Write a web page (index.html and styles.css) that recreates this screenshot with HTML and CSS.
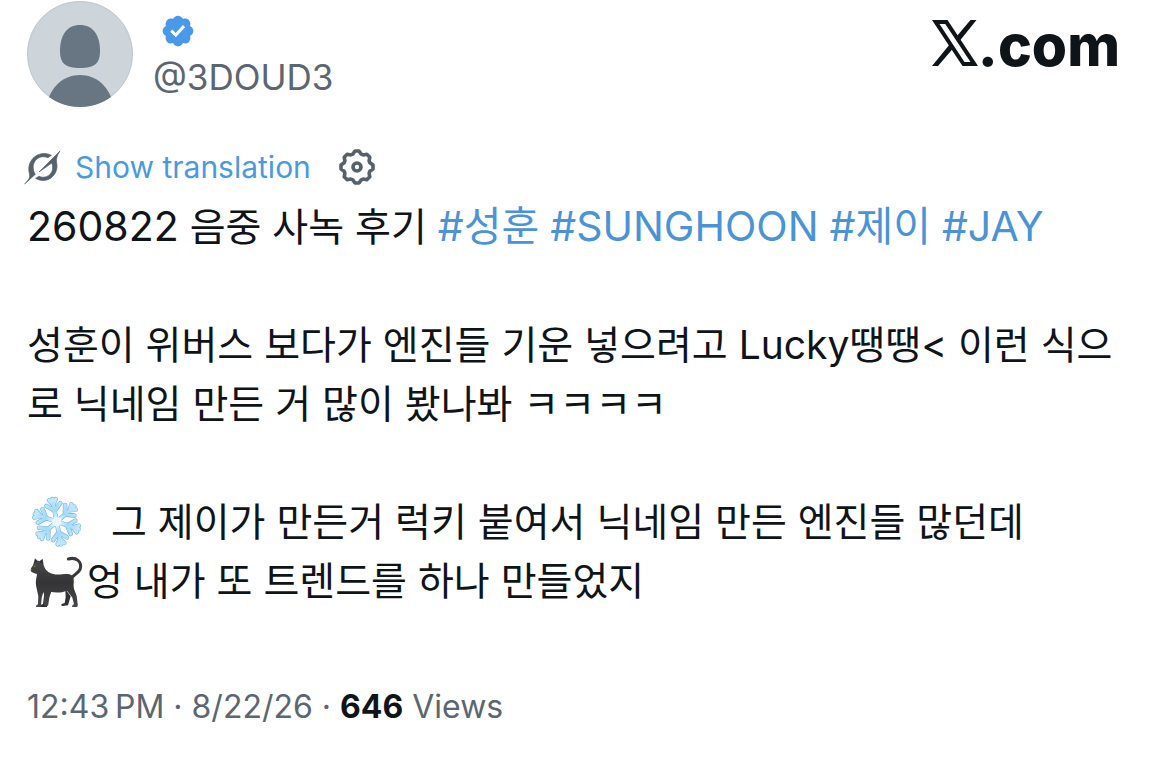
FILE: index.html
```
<!DOCTYPE html>
<html lang="ko">
<head>
    <meta charset="UTF-8">
    <meta name="viewport" content="width=device-width, initial-scale=1.0">
    <title>@3DOUD3 on X</title>
    <link rel="stylesheet" href="styles.css">
</head>
<body>
    <article class="post">
        <header class="post-header">
            <svg class="avatar" viewBox="0 0 106 106" role="img" aria-label="Profile picture">
                <clipPath id="round"><circle cx="53" cy="53" r="53"/></clipPath>
                <g clip-path="url(#round)">
                    <rect width="106" height="106" fill="#cdd5db"/>
                    <circle cx="53" cy="53" r="52.5" fill="none" stroke="#bfc7cd"/>
                    <path d="M53 24C66 24 73 34 73 50C73 62 68 67 53 67C38 67 33 62 33 50C33 34 40 24 53 24Z" fill="#687684"/>
                    <path d="M19 106C23 86 36 74 53 74C70 74 83 86 87 106Z" fill="#687684"/>
                </g>
            </svg>
            <div class="user">
                <svg class="badge" viewBox="0 0 24 24" role="img" aria-label="Verified account">
                    <path fill="#4a99e9" d="M22.25 12c0-1.43-.88-2.67-2.19-3.34.46-1.39.2-2.9-.81-3.91s-2.52-1.27-3.91-.81c-.66-1.31-1.91-2.19-3.34-2.19s-2.67.88-3.33 2.19c-1.4-.46-2.91-.2-3.92.81s-1.26 2.52-.8 3.91c-1.31.67-2.2 1.91-2.2 3.34s.89 2.67 2.2 3.34c-.46 1.39-.21 2.9.8 3.91s2.52 1.26 3.91.81c.67 1.31 1.91 2.19 3.34 2.19s2.68-.88 3.34-2.19c1.39.45 2.9.2 3.91-.81s1.27-2.52.81-3.91c1.31-.67 2.19-1.91 2.19-3.34zm-11.71 4.2L6.8 12.46l1.41-1.42 2.26 2.26 4.8-5.23 1.47 1.36-6.2 6.77z"/>
                </svg>
                <a class="handle" href="#">@3DOUD3</a>
            </div>
            <a class="site" href="#">
                <svg class="x-logo" viewBox="0 0 46 46" role="img" aria-label="X">
                    <path fill="#0f1419" fill-rule="evenodd" d="M0 0H15.5L46 46H30.5ZM7.5 4L32.5 42H38.5L13.3 4Z"/>
                    <path fill="#0f1419" d="M38.5 0H44.5L28 20.5L25 16ZM18 24L21 28.5L6 46H0Z"/>
                </svg>.com
            </a>
        </header>

        <div class="translate">
            <svg class="grok" viewBox="42 24 108 108" aria-hidden="true">
                <g fill="#56616b" stroke="#56616b" stroke-width="2">
                    <path d="M150 30C141 44 138 52 140 66C148 101 110 133 77 112L87 106C108 115 128 100 128 80C128 72 126 68 124 67L87 93Z"/>
                    <path d="M44 129C57 116 61 110 58 97C48 56 88 24 124 43L114 50C87 39 66 61 70 84C71 92 74 97 76 100Z"/>
                </g>
            </svg>
            <button class="translate-button">Show translation</button>
            <button class="gear-button" aria-label="Translation settings">
                <svg class="gear" viewBox="-19 -19 38 38" fill="none" stroke="#56616b" stroke-width="3.6" stroke-linejoin="round">
                    <path d="M-2-16H2L4.2-12.9L6.2-12.1L9.8-12.8L12.8-9.8L12.1-6.2L12.9-4.2L16-2V2L12.9 4.2L12.1 6.2L12.8 9.8L9.8 12.8L6.2 12.1L4.2 12.9L2 16H-2L-4.2 12.9L-6.2 12.1L-9.8 12.8L-12.8 9.8L-12.1 6.2L-12.9 4.2L-16 2V-2L-12.9-4.2L-12.1-6.2L-12.8-9.8L-9.8-12.8L-6.2-12.1L-4.2-12.9Z"/>
                    <circle r="4"/>
                </svg>
            </button>
        </div>

        <div class="post-text">
            <p class="tags"><span class="date">260822</span> 음중 사녹 후기 <a href="#">#성훈</a> <a href="#">#SUNGHOON</a> <a href="#">#제이</a> <a href="#">#JAY</a></p>
            <p>성훈이 위버스 보다가 엔진들 기운 넣으려고 Lucky땡땡&lt; 이런 식으로 닉네임 만든 거 많이 봤나봐 ㅋㅋㅋㅋ</p>
            <p>
                <svg class="emoji snow" viewBox="9 6 180 162" role="img" aria-label="Snowflake">
                    <defs>
                        <radialGradient id="ice" gradientUnits="userSpaceOnUse" cx="0" cy="0" r="76">
                            <stop offset="0" stop-color="#f4fdff"/>
                            <stop offset=".45" stop-color="#a3d9f8"/>
                            <stop offset="1" stop-color="#c8eafb"/>
                        </radialGradient>
                        <path id="arm" d="M0 0L0.1-69M0-33L-21-52M0-33L21-52M0-52L-10-67M0-52L10-67"/>
                        <g id="flake">
                            <use href="#arm"/>
                            <use href="#arm" transform="rotate(60)"/>
                            <use href="#arm" transform="rotate(120)"/>
                            <use href="#arm" transform="rotate(180)"/>
                            <use href="#arm" transform="rotate(240)"/>
                            <use href="#arm" transform="rotate(300)"/>
                        </g>
                    </defs>
                    <g transform="translate(98 89) rotate(-11)" fill="none" stroke-linecap="round">
                        <use href="#flake" stroke="#7fb9dd" stroke-width="14"/>
                        <use href="#flake" stroke="url(#ice)" stroke-width="10"/>
                        <circle r="14" fill="#e9faff"/>
                    </g>
                </svg>그 제이가 만든거 럭키 붙여서 닉네임 만든 엔진들 많던데<br>
                <svg class="emoji" viewBox="9 6 180 162" role="img" aria-label="Black cat">
                    <defs>
                        <linearGradient id="fur" x1="0" y1="0" x2="0" y2="1">
                            <stop offset="0" stop-color="#4a4a4c"/>
                            <stop offset=".5" stop-color="#343436"/>
                            <stop offset="1" stop-color="#48484a"/>
                        </linearGradient>
                    </defs>
                    <g transform="translate(-4 3)">
                        <path fill="none" stroke="#39393b" stroke-width="9" stroke-linecap="round" d="M137 21C161 14 178 29 173 49C169 66 151 66 146 80"/>
                        <path fill="#303032" d="M70 112L64 132L61 156L52 160Q50 165 56 166L73 165L78 137L86 118ZM128 112L129 136L126 153L117 156Q114 161 120 162L136 160L144 133Z"/>
                        <path fill="url(#fur)" d="M37 19L45 26L51 27L60 20L63 40C67 53 76 63 92 66C109 70 122 65 136 66C150 67 155 78 153 94C151 110 158 118 162 132L165 156Q167 166 159 165L149 165Q146 161 154 156L149 137C145 130 138 123 133 116C117 123 98 122 85 120L80 137L77 157Q78 162 70 161L64 159L64 127L62 120L57 137L55 161Q53 166 46 166L40 164Q39 160 46 157L47 133L41 105C37 89 42 76 43 66C35 64 27 62 24 57L25 49L31 40Z"/>
                        <path fill="#28282a" d="M38 23L43 27L36 34ZM57 25L60 35L52 30Z"/>
                        <path fill="#9a963a" d="M33 42L39 41L37 46Z"/>
                        <path fill="#77696c" d="M24 51L29 52L26 56Z"/>
                    </g>
                </svg>엉 내가 또 트렌드를 하나 만들었지
            </p>
        </div>

        <footer class="post-info">12:43&#8239;PM · 8/22/26 · <strong>646</strong> Views</footer>
    </article>
</body>
</html>
```
FILE: styles.css
```
body {
    margin: 0;
    background-color: #fff;
    color: #0f1419;
    font-family: Inter, "Noto Sans CJK KR", sans-serif;
}
a {
    color: #4a94d6;
    text-decoration: none;
}
.post {
    padding: 1px 28px 40px 27px;
}
.post-header {
    display: flex;
    align-items: flex-start;
}
.avatar {
    width: 106px;
    height: 106px;
}
.user {
    display: flex;
    flex-direction: column;
    padding: 12px 0 0 20px;
}
.badge {
    width: 36px;
    height: 36px;
    margin-left: 7px;
}
.handle {
    color: #5b6670;
    font-size: 35px;
    line-height: 56px;
}
.site {
    display: flex;
    align-items: baseline;
    margin: 13px 22px 0 auto;
    color: #0f1419;
    font-size: 57px;
    font-weight: 800;
    line-height: 64px;
}
.x-logo {
    width: 46px;
    height: 46px;
}
.translate {
    display: flex;
    align-items: center;
    height: 40px;
    margin-top: 40px;
}
.grok {
    width: 36px;
    height: 36px;
    margin-left: -3px;
}
.translate button {
    padding: 0;
    border: none;
    background: none;
    cursor: pointer;
}
.translate .translate-button {
    margin-left: 15px;
    color: #4a9adf;
    font-family: inherit;
    font-size: 30px;
}
.translate .gear-button {
    margin-left: 27px;
}
.gear {
    display: block;
    width: 38px;
    height: 38px;
}
.post-text {
    margin-top: 10px;
    font-size: 39px;
    line-height: 59px;
}
.post-text p {
    margin: 0 0 59px;
}
.tags a, .date {
    font-size: 41px;
    line-height: 1;
}
.emoji {
    width: 60px;
    height: 54px;
    vertical-align: -12px;
}
.snow {
    margin-right: 24px;
}
.post-info {
    margin-top: 77px;
    color: #5b6670;
    font-size: 32px;
    line-height: 40px;
}
.post-info strong {
    color: #0f1419;
}
```
